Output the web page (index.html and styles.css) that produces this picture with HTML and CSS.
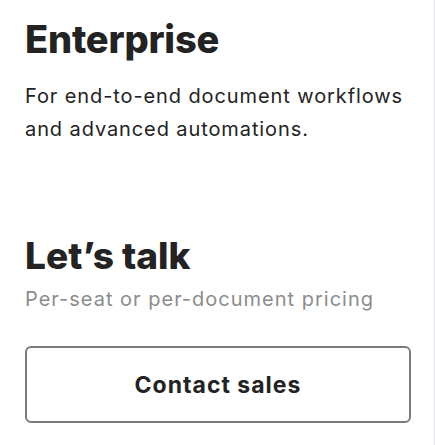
FILE: index.html
```html
<!DOCTYPE html>
<html>
<head>
<meta charset="utf-8">
<link rel="stylesheet" href="styles.css">
</head>
<body>
<div class="card">
  <h2 class="title">Enterprise</h2>
  <p class="desc">For end-to-end document workflows and advanced automations.</p>
  <div class="price">Let’s talk</div>
  <p class="note">Per-seat or per-document pricing</p>
  <a class="btn">Contact sales</a>
</div>
</body>
</html>
```
FILE: styles.css
```css
html, body { margin: 0; padding: 0; background: #fff; }
body { width: 435px; height: 445px; overflow: hidden; }
.card {
  box-sizing: border-box;
  width: 435px;
  height: 445px;
  border-right: 1px solid #e6e4f7;
  padding: 14px 25px 0 25px;
  font-family: Inter, "Noto Sans", sans-serif;
  color: #232323;
}
.title {
  margin: 0;
  font-size: 38px;
  font-weight: 800;
  letter-spacing: -0.2px;
  line-height: 50px;
}
.desc {
  margin: 16px 0 0 0;
  font-size: 20px;
  line-height: 33px;
  letter-spacing: 0.9px;
  width: 390px;
}
.price {
  margin-top: 88px;
  font-size: 37px;
  font-weight: 800;
  letter-spacing: 0;
  line-height: 44px;
}
.note {
  margin: 8px 0 0 0;
  font-size: 20px;
  line-height: 26px;
  letter-spacing: 1px;
  color: #8c8c8c;
}
.btn {
  box-sizing: border-box;
  margin-top: 34px;
  display: flex;
  align-items: center;
  justify-content: center;
  width: 386px;
  height: 77px;
  border: 2px solid #7b7b7b;
  border-radius: 6px;
  font-size: 23px;
  font-weight: 700;
  letter-spacing: 1px;
  color: #232323;
}
```
